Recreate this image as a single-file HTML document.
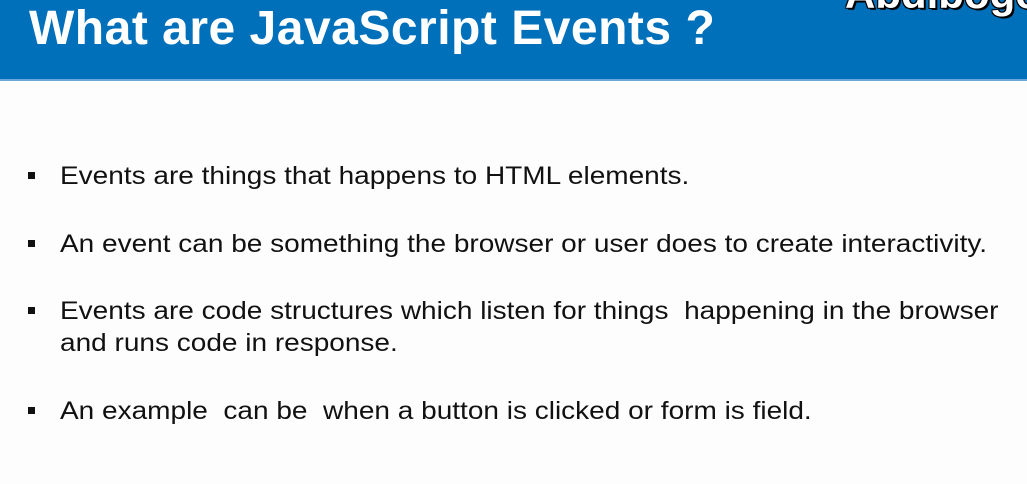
<!DOCTYPE html>
<html><head><style>
html,body{margin:0;padding:0;width:1027px;height:484px;overflow:hidden;background:#fdfdfd;font-family:"Liberation Sans",Arial,sans-serif;}
.hdr{position:absolute;left:0;top:0;width:1027px;height:79px;background:#0070ba;border-bottom:2px solid #6aa6d6;overflow:hidden;}
.title{position:absolute;left:29px;top:0px;font-weight:bold;font-size:48px;color:#fff;white-space:nowrap;transform:scaleX(1.0);transform-origin:left top;line-height:58px;letter-spacing:0.5px;}
.logo{position:absolute;left:845px;top:-30px;font-weight:bold;font-size:42px;color:#fff;white-space:nowrap;text-shadow:-1px -1px 0 #000,1px -1px 0 #000,-1px 1px 0 #000,2px 2px 0 #000;}
.l{position:absolute;left:60px;font-size:25px;color:#111;white-space:nowrap;line-height:30px;transform:scaleX(1.12);transform-origin:left top;}
.b{position:absolute;left:28px;width:7px;height:7px;background:#111;}
</style></head><body>
<div class="hdr"><div class="title">What are JavaScript Events ?</div><div class="logo">Abdibogor</div></div>
<div class="b" style="top:172px"></div><div class="l" style="top:161px">Events are things that happens to HTML elements.</div>
<div class="b" style="top:240px"></div><div class="l" style="top:229px">An event can be something the browser or user does to create interactivity.</div>
<div class="b" style="top:307px"></div><div class="l" style="top:296px">Events are code structures which listen for things&nbsp; happening in the browser</div>
<div class="l" style="top:328px">and runs code in response.</div>
<div class="b" style="top:407px"></div><div class="l" style="top:396px">An example&nbsp; can be&nbsp; when a button is clicked or form is field.</div>
</body></html>
